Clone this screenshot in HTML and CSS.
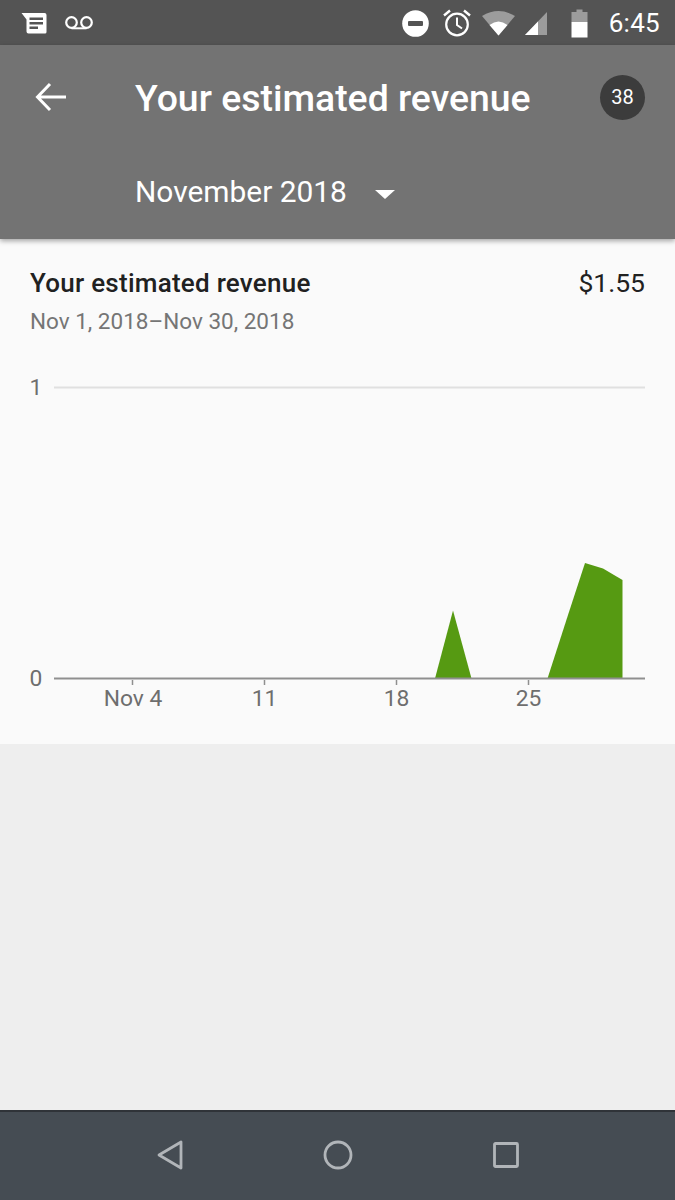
FILE: index.html
```html
<!DOCTYPE html>
<html lang="en">
<head>
<meta charset="utf-8">
<title>Your estimated revenue</title>
<link rel="stylesheet" href="styles.css">
</head>
<body>
<div class="phone">
  <div class="status">
    <div class="status-left">
      <svg class="ic-msg" width="26" height="22" viewBox="0 0 26 22"><path d="M0.500 1H23.500a2 2 0 0 1 2 2V20a1.500 1.500 0 0 1-1.500 1.500H7.500A2 2 0 0 1 5.500 19.500V7.500Z" fill="#fff"/><path d="M8.500 5.500H22v2.400H8.500zM8.500 10h13.500v2.400H8.500zM8.500 14.500h8.500v2.400H8.500z" fill="#545454"/></svg>
      <svg class="ic-vm" width="30" height="16" viewBox="0 0 30 16"><circle cx="7.500" cy="7.500" r="5.300" fill="none" stroke="#fff" stroke-width="2.200"/><circle cx="22.500" cy="7.500" r="5.300" fill="none" stroke="#fff" stroke-width="2.200"/><path d="M7.500 13.300H22.500" stroke="#fff" stroke-width="2"/></svg>
    </div>
    <div class="status-right">
      <svg class="ic-dnd" width="27" height="27" viewBox="0 0 27 27"><circle cx="13.500" cy="13.500" r="13.300" fill="#fff"/><rect x="6" y="11" width="15" height="5" rx="1" fill="#545454"/></svg>
      <svg class="ic-alarm" width="28" height="28" viewBox="0 0 28 28"><circle cx="14" cy="15.500" r="10.800" fill="none" stroke="#fff" stroke-width="2.200"/><path d="M14 8.500V16l5 3.500" fill="none" stroke="#fff" stroke-width="2"/><path d="M1 6.500L7 1.500M27 6.500L21 1.500" stroke="#fff" stroke-width="2.400"/></svg>
      <svg class="ic-wifi" width="33" height="26" viewBox="0 0 33 26"><path d="M0 6Q16.500 -4 33 6L16.500 25.500Z" fill="#9c9c9c"/><path d="M7.500 15Q16.500 8 25.500 15L16.500 25.500Z" fill="#fff"/></svg>
      <svg class="ic-signal" width="22" height="23" viewBox="0 0 22 23"><path d="M22 0V23H0Z" fill="#9c9c9c"/><path d="M13 9.500V23H0Z" fill="#fff"/></svg>
      <svg class="ic-batt" width="17" height="29" viewBox="0 0 17 29"><path d="M5.500 0.500H11.500V3H16.500V13H0.500V3H5.500Z" fill="#9c9c9c"/><rect x="0.500" y="13" width="16" height="15.500" fill="#fff"/></svg>
      <span class="clock">6:45</span>
    </div>
  </div>

  <header class="appbar">
    <div class="appbar-row">
      <svg class="back" width="32" height="30" viewBox="0 0 32 30"><path d="M32 15H5M16 2L3.500 15L16 28" fill="none" stroke="#fff" stroke-width="3"/></svg>
      <h1 class="title">Your estimated revenue</h1>
      <span class="badge">38</span>
    </div>
    <div class="picker">
      <span class="month">November 2018</span>
      <span class="caret"></span>
    </div>
  </header>

  <main class="card">
    <div class="card-head">
      <div class="card-row">
        <h2 class="card-title">Your estimated revenue</h2>
        <span class="amount">$1.55</span>
      </div>
      <div class="range">Nov 1, 2018–Nov 30, 2018</div>
    </div>
    <svg class="chart" width="675" height="374" viewBox="0 370 675 374">
      <line x1="54" y1="387.500" x2="645" y2="387.500" stroke="#e0e0e0" stroke-width="2"/>
      <path d="M435 678.500L453 610.500L471.500 678.500Z" fill="#569a12"/>
      <path d="M547.500 678.500L568 615L585 563L603 568.500L622.500 580V678.500Z" fill="#569a12"/>
      <line x1="54" y1="678.500" x2="645" y2="678.500" stroke="#8f8f8f" stroke-width="2"/>
      <path d="M132.500 680V685M264.500 680V685M396.500 680V685M528.500 680V685" stroke="#8f8f8f" stroke-width="1.500"/>
      <text class="tick" x="36" y="395" text-anchor="middle">1</text>
      <text class="tick" x="36" y="686" text-anchor="middle">0</text>
      <text class="tick" x="133" y="706" text-anchor="middle">Nov 4</text>
      <text class="tick" x="264.500" y="706" text-anchor="middle">11</text>
      <text class="tick" x="396.500" y="706" text-anchor="middle">18</text>
      <text class="tick" x="528.500" y="706" text-anchor="middle">25</text>
    </svg>
  </main>

  <div class="empty"></div>

  <nav class="navbar">
    <svg width="26" height="30" viewBox="0 0 26 30"><path d="M24 2V28L2 15Z" fill="none" stroke="#b1b5b9" stroke-width="2.800" stroke-linejoin="round"/></svg>
    <svg width="30" height="30" viewBox="0 0 30 30"><circle cx="15" cy="15" r="13" fill="none" stroke="#b1b5b9" stroke-width="2.800"/></svg>
    <svg width="26" height="26" viewBox="0 0 26 26"><rect x="1.500" y="1.500" width="23" height="23" rx="1" fill="none" stroke="#b1b5b9" stroke-width="2.800"/></svg>
  </nav>
</div>
</body>
</html>
```
FILE: styles.css
```css
* { box-sizing: border-box; }
html, body { margin: 0; padding: 0; }
body { font-family: Roboto, "Liberation Sans", sans-serif; background: #eee; }
.phone { width: 675px; height: 1200px; display: flex; flex-direction: column; overflow: hidden; }

.status { height: 45px; flex: none; background: #545454; display: flex; justify-content: space-between; align-items: center; padding: 1px 15px 0 21px; }
.status-left { display: flex; align-items: center; gap: 17px; }
.status-right { display: flex; align-items: center; }
.status-right svg { display: block; }
.ic-dnd { margin-right: 13.5px; }
.ic-alarm { margin-right: 11.5px; }
.ic-wifi { margin-right: 10px; }
.ic-signal { margin-right: 24px; }
.ic-batt { margin-right: 20.5px; }
.clock { color: #fff; font-size: 26px; letter-spacing: 0.3px; }

.appbar { height: 194px; flex: none; background: #737373; box-shadow: 0 2px 5px rgba(0,0,0,.35); position: relative; z-index: 1; padding-top: 29px; }
.appbar-row { display: flex; align-items: center; height: 46px; padding: 0 30px 0 34px; }
.back { flex: none; margin-right: 69px; }
.title { flex: 1; margin: 0; padding-top: 2px; color: #fff; font-size: 37.4px; font-weight: 500; }
.badge { width: 45px; height: 45px; border-radius: 50%; background: #3c3c3c; color: #fff; font-size: 20px; display: flex; align-items: center; justify-content: center; }
.picker { display: flex; align-items: center; padding: 0 0 0 135px; margin-top: 50px; height: 42px; }
.month { color: #fff; font-size: 29.9px; }
.caret { width: 0; height: 0; margin: 7px 0 0 28px; border-left: 10px solid transparent; border-right: 10px solid transparent; border-top: 9px solid #fff; }

.card { height: 505px; flex: none; background: #fafafa; }
.card-head { height: 131px; padding: 27px 30px 0; }
.card-row { display: flex; justify-content: space-between; align-items: center; height: 34px; }
.card-title { margin: 0; font-size: 26px; font-weight: 500; color: #212121; letter-spacing: 0.25px; }
.amount { font-size: 26.5px; color: #212121; padding-bottom: 2px; }
.range { margin-top: 8px; font-size: 22.5px; color: #757575; }
.chart { display: block; }
.tick { font-family: Roboto, "Liberation Sans", sans-serif; font-size: 22.8px; fill: #6e6e6e; }

.empty { flex: 1; background: #eee; }
.navbar { height: 90px; flex: none; background: #454c53; border-top: 2px solid #2f3338; display: flex; align-items: center; justify-content: center; gap: 140px; padding-bottom: 2px; }
.navbar svg { display: block; }
```
